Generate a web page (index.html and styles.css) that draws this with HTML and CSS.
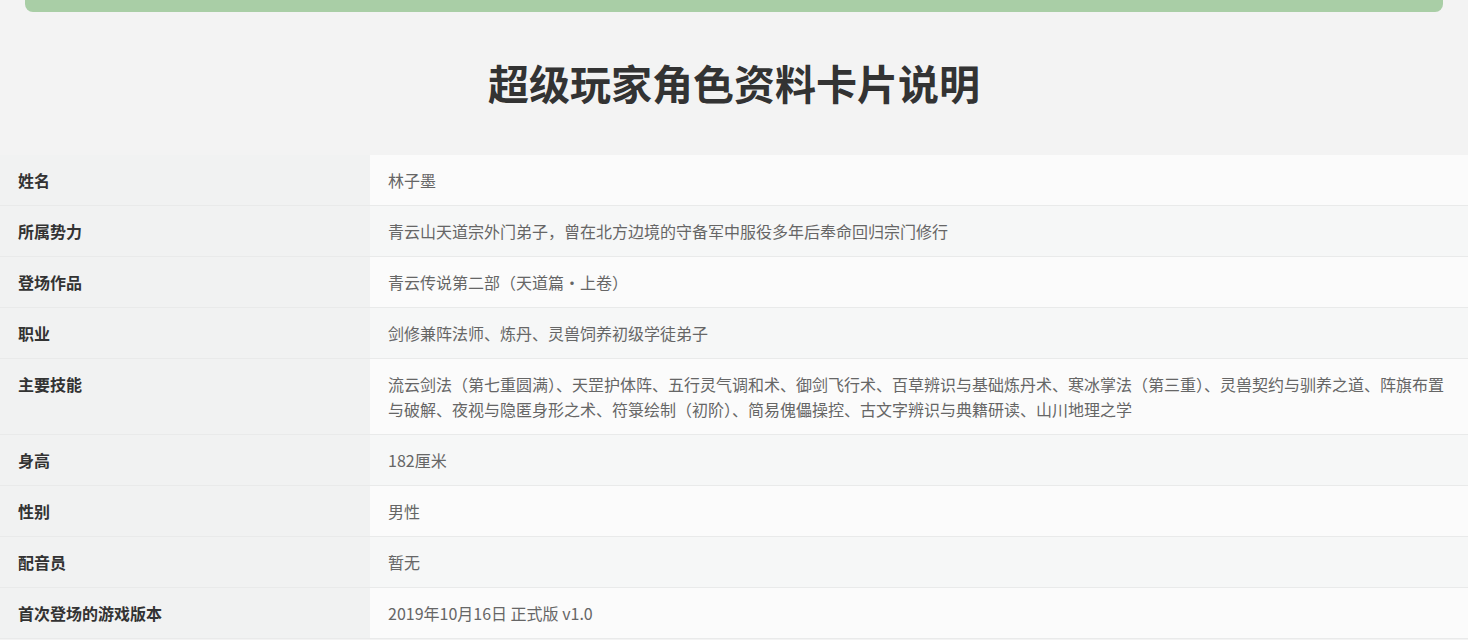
FILE: index.html
```html
<!DOCTYPE html>
<html lang="zh-CN">
<head>
<meta charset="utf-8">
<title>角色资料</title>
<link rel="stylesheet" href="styles.css">
</head>
<body>
<div class="topbar"></div>
<h1 class="title">超级玩家角色资料卡片说明</h1>
<div class="info">
  <div class="row"><div class="label">姓名</div><div class="value">林子墨</div></div>
  <div class="row"><div class="label">所属势力</div><div class="value">青云山天道宗外门弟子，曾在北方边境的守备军中服役多年后奉命回归宗门修行</div></div>
  <div class="row"><div class="label">登场作品</div><div class="value">青云传说第二部（天道篇·上卷）</div></div>
  <div class="row"><div class="label">职业</div><div class="value">剑修兼阵法师、炼丹、灵兽饲养初级学徒弟子</div></div>
  <div class="row"><div class="label">主要技能</div><div class="value">流云剑法（第七重圆满）、天罡护体阵、五行灵气调和术、御剑飞行术、百草辨识与基础炼丹术、寒冰掌法（第三重）、灵兽契约与驯养之道、阵旗布置与破解、夜视与隐匿身形之术、符箓绘制（初阶）、简易傀儡操控、古文字辨识与典籍研读、山川地理之学</div></div>
  <div class="row"><div class="label">身高</div><div class="value">182厘米</div></div>
  <div class="row"><div class="label">性别</div><div class="value">男性</div></div>
  <div class="row"><div class="label">配音员</div><div class="value">暂无</div></div>
  <div class="row"><div class="label">首次登场的游戏版本</div><div class="value">2019年10月16日 正式版 v1.0</div></div>
</div>
</body>
</html>
```

FILE: styles.css
```css
html, body {
  margin: 0;
  padding: 0;
}
body {
  background: #f3f3f3;
  font-family: "Noto Sans CJK SC", "Noto Sans", sans-serif;
  color: #333;
}
.topbar {
  height: 12px;
  margin: 0 25px;
  background: #a9cea6;
  border-radius: 0 0 8px 8px;
}
.title {
  margin: 42px 0 45px;
  font-size: 41px;
  line-height: 56px;
  font-weight: 700;
  text-align: center;
  color: #333;
}
.info {
  display: flex;
  flex-direction: column;
}
.row {
  display: grid;
  grid-template-columns: 370px 1fr;
  border-bottom: 1px solid #e9eaea;
}
.label {
  padding: 13px 18px 12px;
  font-size: 16px;
  line-height: 25px;
  font-weight: 700;
  color: #333;
  background: #f1f2f2;
}
.value {
  padding: 13px 18px 12px;
  font-size: 16px;
  line-height: 25px;
  color: #666;
  background: #fbfbfb;
}
.row:nth-child(even) .value {
  background: #f6f7f7;
}
```
